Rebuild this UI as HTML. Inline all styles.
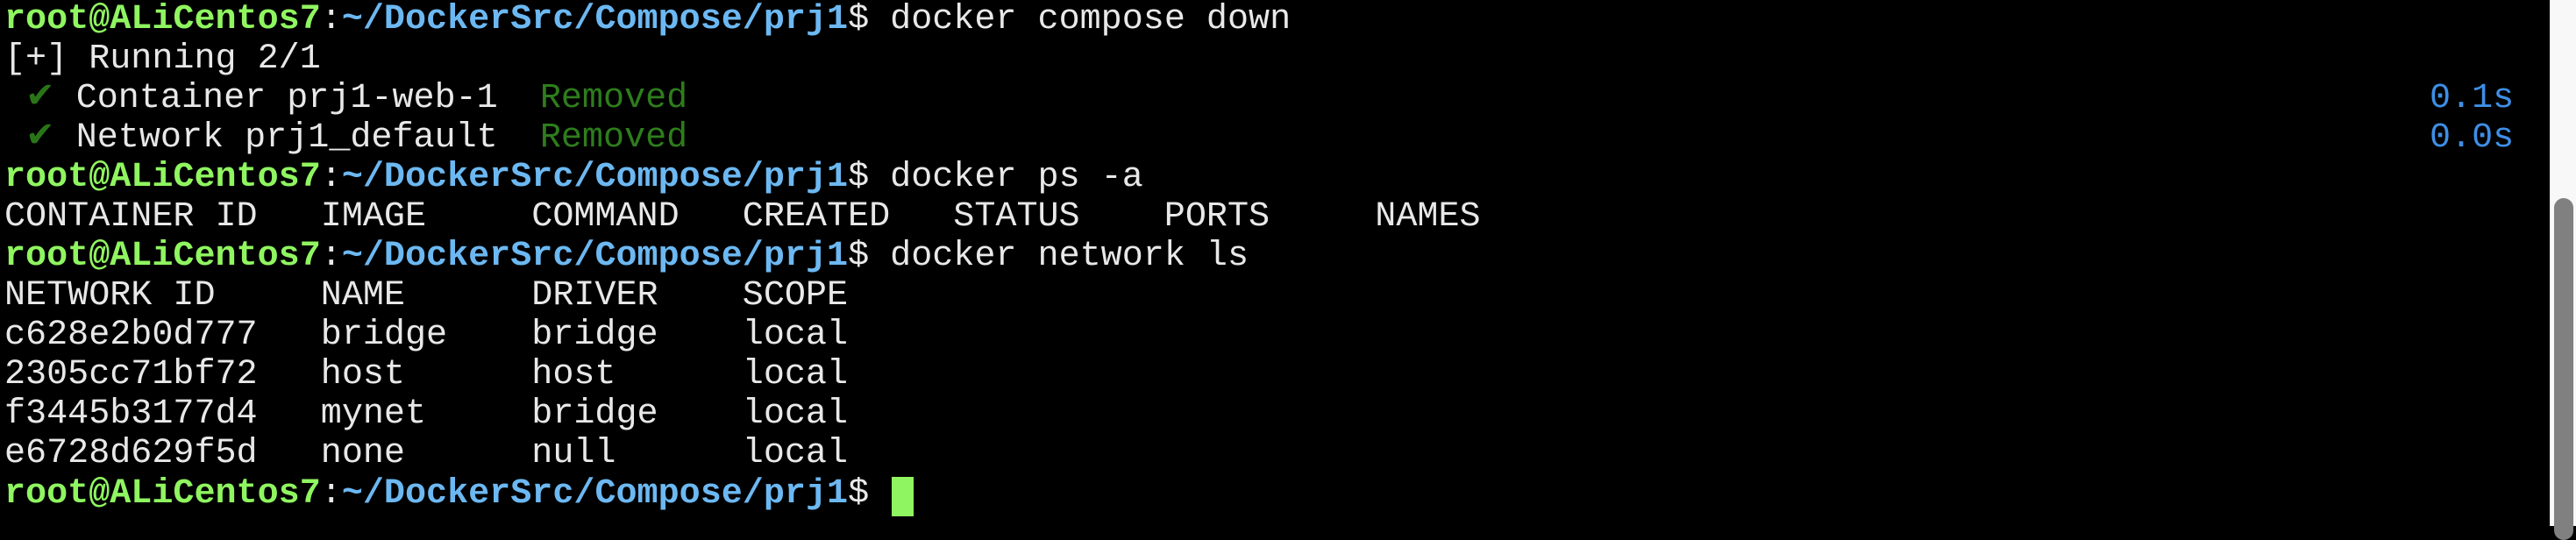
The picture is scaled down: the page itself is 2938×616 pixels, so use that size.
<!DOCTYPE html>
<html><head><meta charset="utf-8"><style>
html,body{margin:0;padding:0;width:2938px;height:600px;overflow:hidden;background:#000;}
.t{position:absolute;left:0;top:0;width:2908px;height:600px;background:#000;}
.l{position:absolute;left:5px;height:46px;line-height:46px;white-space:pre;font-family:"Liberation Mono",monospace;font-size:40.1px;color:#e8e8e8;}
.g{color:#8ff560;font-weight:bold}
.b{color:#6cb8f2;font-weight:bold}
.r{color:#2e7d1c}
.c{color:#2a7418}
.s{color:#3e8fe6}
.sb{position:absolute;left:2908px;top:0;width:30px;height:600px;background:#f8f8f8;border-left:1px solid #e4e4e4;box-sizing:border-box;}
.th{position:absolute;left:2913px;top:226px;width:22px;height:390px;background:#808080;border-radius:11px;}
.cur{position:absolute;left:1017px;top:544px;width:25px;height:45px;background:#8ff560;}
</style></head><body>
<div class="t">
<div class="l" style="top:0px"><span class="g">root@ALiCentos7</span>:<span class="b">~/DockerSrc/Compose/prj1</span>$ docker compose down</div>
<div class="l" style="top:45px">[+] Running 2/1</div>
<div class="l" style="top:90px"> <span class="c">✔</span> Container prj1-web-1  <span class="r">Removed</span></div>
<div class="l" style="top:135px"> <span class="c">✔</span> Network prj1_default  <span class="r">Removed</span></div>
<div class="l s" style="top:90px;left:2771px">0.1s</div>
<div class="l s" style="top:135px;left:2771px">0.0s</div>
<div class="l" style="top:180px"><span class="g">root@ALiCentos7</span>:<span class="b">~/DockerSrc/Compose/prj1</span>$ docker ps -a</div>
<div class="l" style="top:225px">CONTAINER ID   IMAGE     COMMAND   CREATED   STATUS    PORTS     NAMES</div>
<div class="l" style="top:270px"><span class="g">root@ALiCentos7</span>:<span class="b">~/DockerSrc/Compose/prj1</span>$ docker network ls</div>
<div class="l" style="top:315px">NETWORK ID     NAME      DRIVER    SCOPE</div>
<div class="l" style="top:360px">c628e2b0d777   bridge    bridge    local</div>
<div class="l" style="top:405px">2305cc71bf72   host      host      local</div>
<div class="l" style="top:450px">f3445b3177d4   mynet     bridge    local</div>
<div class="l" style="top:495px">e6728d629f5d   none      null      local</div>
<div class="l" style="top:541px"><span class="g">root@ALiCentos7</span>:<span class="b">~/DockerSrc/Compose/prj1</span>$ </div>
<div class="cur"></div>
</div>
<div class="sb"></div>
<div class="th"></div>
</body></html>
